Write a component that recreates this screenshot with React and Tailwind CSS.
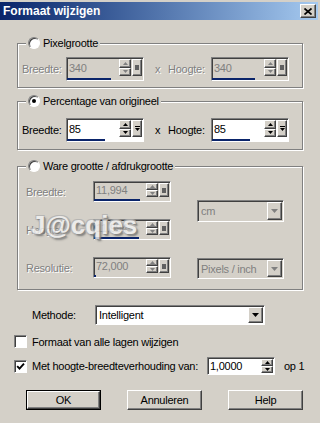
import React from 'react'

const raised =
  'bg-[#d4d0c8] border border-t-white border-l-white border-r-[#404040] border-b-[#404040] shadow-[inset_-1px_-1px_0_#808080]'
const sunken =
  'border border-t-[#808080] border-l-[#808080] border-r-white border-b-white shadow-[inset_1px_1px_0_#404040]'
const dim = 'text-[#808080] [text-shadow:1px_1px_0_#fff]'

function Tri({ dir = 'down', color = '#000', w = 5, h = 3 }) {
  const pts = dir === 'up' ? `0,${h} ${w / 2},0 ${w},${h}` : `0,0 ${w},0 ${w / 2},${h}`
  return (
    <svg width={w} height={h} viewBox={`0 0 ${w} ${h}`} className="block">
      <polygon points={pts} fill={color} />
    </svg>
  )
}

function SpinButtons({ color }) {
  return (
    <div className="flex flex-col w-[12px] py-[1px]">
      <div className={`${raised} flex-1 flex items-center justify-center`}>
        <Tri dir="up" color={color} />
      </div>
      <div className={`${raised} flex-1 flex items-center justify-center`}>
        <Tri color={color} />
      </div>
    </div>
  )
}

function Spin({ value, disabled, size = 'h-[24px]', barWidth = 'w-[44px]' }) {
  const color = disabled ? '#808080' : '#000'
  return (
    <div className={`${sunken} ${size} w-[78px] flex flex-col ${disabled ? 'bg-[#d4d0c8]' : 'bg-white'}`}>
      <div className="flex flex-1 min-h-0">
        <div className={`flex-1 flex items-center pl-[2px] ${disabled ? 'text-[#808080]' : 'text-black'}`}>
          {value}
        </div>
        <SpinButtons color={color} />
        <div className={`${raised} w-[10px] my-[1px] mx-[1px] flex flex-col items-center justify-center gap-[1px]`}>
          {disabled ? (
            <div className="w-[4px] h-[5px] bg-[#606060]" />
          ) : (
            <>
              <div className="w-[5px] h-[1px] bg-black" />
              <Tri color="#000" />
            </>
          )}
        </div>
      </div>
      <div className="h-[3px] flex items-end">
        <div className={`h-[2px] ${barWidth} bg-[#0a246a]`} />
      </div>
    </div>
  )
}

function Select({ value, disabled, className }) {
  return (
    <div className={`${sunken} ${className} flex ${disabled ? 'bg-[#d4d0c8]' : 'bg-white'}`}>
      <div className={`flex-1 flex items-center pl-[3px] ${disabled ? 'text-[#808080]' : 'text-black'}`}>
        {value}
      </div>
      <div className={`${raised} w-[15px] my-[1px] mr-[1px] flex items-center justify-center`}>
        <Tri w={7} h={4} color={disabled ? '#808080' : '#000'} />
      </div>
    </div>
  )
}

function Radio({ checked }) {
  return (
    <div className="w-[12px] h-[12px] rounded-full border border-t-[#808080] border-l-[#808080] border-r-white border-b-white bg-white shadow-[inset_1px_1px_0_#404040] flex items-center justify-center">
      {checked && <div className="w-[4px] h-[4px] rounded-full bg-black" />}
    </div>
  )
}

function Check({ checked }) {
  return (
    <div className={`${sunken} w-[13px] h-[13px] bg-white flex items-center justify-center`}>
      {checked && (
        <svg width="9" height="9" viewBox="0 0 9 9" className="block">
          <path d="M1.2 4.2l2.3 2.4L8 1.6" stroke="#000" strokeWidth="1.9" fill="none" />
        </svg>
      )}
    </div>
  )
}

function Group({ label, checked, className = '', children }) {
  return (
    <fieldset
      className={`border border-[#808080] shadow-[inset_1px_1px_0_#fff,1px_1px_0_#fff] w-[286px] ml-[3px] ${className}`}
    >
      <legend className="ml-[8px] px-[2px] bg-[#d4d0c8]">
        <span className="flex items-center gap-[3px] h-[14px]">
          <Radio checked={checked} />
          <span>{label}</span>
        </span>
      </legend>
      {children}
    </fieldset>
  )
}

function SizeRow({ disabled, w, h, wBar, hBar }) {
  const tone = disabled ? dim : 'text-black'
  return (
    <div className="flex items-center">
      <span className={`w-[44px] ${tone}`}>Breedte:</span>
      <Spin value={w} disabled={disabled} barWidth={wBar} />
      <span className={`ml-[11px] w-[13px] ${tone}`}>x</span>
      <span className={`w-[43px] ${tone}`}>Hoogte:</span>
      <Spin value={h} disabled={disabled} barWidth={hBar} />
    </div>
  )
}

function Button({ label, isDefault }) {
  if (isDefault) {
    return (
      <div className="w-[75px] h-[20px] border border-black">
        <div className={`${raised} w-full h-full flex items-center justify-center`}>{label}</div>
      </div>
    )
  }
  return <div className={`${raised} w-[75px] h-[20px] flex items-center justify-center`}>{label}</div>
}

export default function App() {
  return (
    <div className="relative w-[320px] h-[423px] overflow-hidden bg-[#d4d0c8] pt-[2px] pr-[2px] font-['Liberation_Sans',Arial,sans-serif] text-[11px] tracking-[-0.25px] text-black leading-[14px]">
      <div className="h-[18px] bg-linear-to-r from-[#0a246a] to-[#a6caf0] flex items-center justify-between pl-[3px] pr-[2px]">
        <span className="text-white font-bold text-[12px] tracking-normal">Formaat wijzigen</span>
        <div className={`${raised} w-[16px] h-[14px] flex items-center justify-center`}>
          <svg width="8" height="7" viewBox="0 0 8 7" className="block">
            <path d="M0.5 0.5L7.5 6.5M7.5 0.5L0.5 6.5" stroke="#000" strokeWidth="1.7" />
          </svg>
        </div>
      </div>

      <div className="flex flex-col pl-[14px]">
        <Group label="Pixelgrootte" className="mt-[16px]">
          <div className="pt-[7px] pb-[6px] pl-[4px]">
            <SizeRow disabled w="340" h="340" wBar="w-[44px]" hBar="w-[43px]" />
          </div>
        </Group>

        <Group label="Percentage van origineel" checked className="mt-[6px]">
          <div className="pt-[10px] pb-[7px] pl-[4px]">
            <SizeRow w="85" h="85" wBar="w-[38px]" hBar="w-[38px]" />
          </div>
        </Group>

        <Group label="Ware grootte / afdrukgrootte" className="mt-[9px]">
          <div className="pt-[8px] pb-[10px] pl-[8px] flex">
            <div className="flex flex-col gap-[17px]">
              <div className="flex items-center">
                <span className={`w-[67px] ${dim}`}>Breedte:</span>
                <Spin value="11,994" disabled size="h-[21px]" barWidth="w-[46px]" />
              </div>
              <div className="flex items-center">
                <span className={`w-[67px] ${dim}`}>Hoogte:</span>
                <Spin value="11,994" disabled size="h-[21px]" barWidth="w-[45px]" />
              </div>
              <div className="flex items-center">
                <span className={`w-[67px] ${dim}`}>Resolutie:</span>
                <Spin value="72,000" disabled size="h-[21px]" barWidth="w-[2px]" />
              </div>
            </div>
            <div className="flex flex-col ml-[26px]">
              <Select value="cm" disabled className="w-[87px] h-[22px] mt-[19px]" />
              <Select value="Pixels / inch" disabled className="w-[87px] h-[21px] mt-[36px]" />
            </div>
          </div>
        </Group>

        <div className="flex items-center h-[20px] mt-[15px] pl-[18px]">
          <span className="w-[63px]">Methode:</span>
          <Select value="Intelligent" className="w-[170px] h-[20px]" />
        </div>

        <div className="flex items-center h-[13px] mt-[10px]">
          <Check />
          <span className="ml-[5px]">Formaat van alle lagen wijzigen</span>
        </div>

        <div className="flex items-center h-[18px] mt-[9px]">
          <Check checked />
          <span className="ml-[5px] w-[175px]">Met hoogte-breedteverhouding van:</span>
          <div className={`${sunken} w-[68px] h-[18px] bg-white flex`}>
            <div className="flex-1 flex items-center pl-[2px]">1,0000</div>
            <SpinButtons color="#000" />
            <div className="w-[1px]" />
          </div>
          <span className="ml-[9px]">op 1</span>
        </div>

        <div className="flex gap-[26px] mt-[15px] ml-[12px]">
          <Button label="OK" isDefault />
          <Button label="Annuleren" />
          <Button label="Help" />
        </div>
      </div>

      <div className="absolute left-[31px] top-[210px] text-[26px] font-bold tracking-normal leading-[30px] text-[#f2f2f2] opacity-80 [text-shadow:1px_1px_0_#7a7a7a,-1px_-1px_0_#b0b0b0,1px_-1px_0_#b0b0b0,-1px_1px_0_#b0b0b0,2px_2px_2px_#666]">
        J@cqies
      </div>
    </div>
  )
}
